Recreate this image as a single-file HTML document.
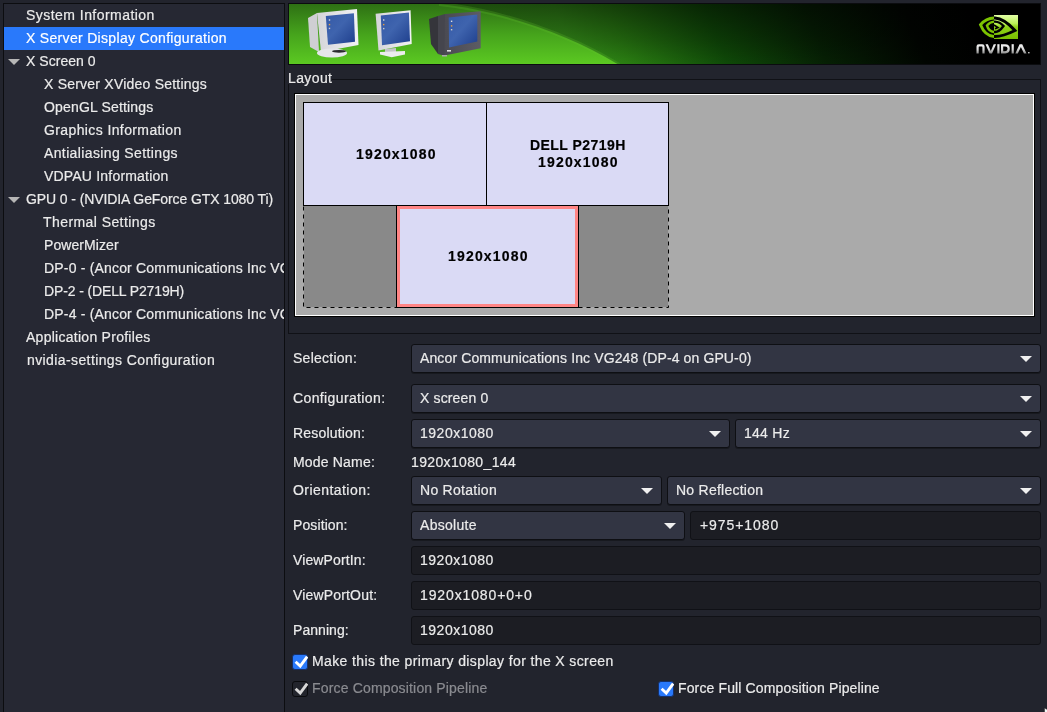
<!DOCTYPE html>
<html><head><meta charset="utf-8">
<style>
*{box-sizing:border-box;margin:0;padding:0}
html,body{width:1047px;height:712px;overflow:hidden;background:#22242d;font-family:"Liberation Sans",sans-serif;color:#ebebeb}
.a{position:absolute}
.t{position:absolute;font-size:14px;line-height:16px;white-space:pre;will-change:transform;-webkit-text-stroke-width:0.2px}
.combo{position:absolute;height:29px;background:#323543;border:1px solid #0e0f13;border-radius:3px;box-shadow:0 1px 0 rgba(0,0,0,.3)}
.combo i{position:absolute;right:8px;top:11px;width:0;height:0;border-left:6px solid transparent;border-right:6px solid transparent;border-top:6.5px solid #f0f0f0}
.entry{position:absolute;height:29px;background:#1c1d23;border:1px solid #101116;border-radius:3px}
.cb{position:absolute;width:15px;height:15px;border-radius:3px}
.cb.on{background:#2979fb;border:1px solid #15306a}
.cb.off{background:#22242c;border:1px solid #0a0b0e}
.cb svg{position:absolute;left:-1px;top:-1px}
</style></head><body>

<div class="a" style="left:3px;top:3px;width:282px;height:709px;background:#262833;border-left:1px solid #0c0d10;border-top:1px solid #0c0d10;border-right:1px solid #0c0d10"></div>
<div class="a" style="left:4px;top:27px;width:280px;height:23px;background:#2979fb"></div>
<div class="a" style="left:4px;top:4px;width:280px;height:708px;overflow:hidden">
<div class="t" style="left:22.00px;top:3px;letter-spacing:0.459px;">System Information</div>
<div class="t" style="left:22.00px;top:26px;letter-spacing:0.315px;color:#ffffff;">X Server Display Configuration</div>
<div class="t" style="left:22.00px;top:49px;letter-spacing:0.043px;">X Screen 0</div>
<div class="a" style="left:4px;top:55px;width:0;height:0;border-left:6px solid transparent;border-right:6px solid transparent;border-top:6px solid #b6b6b6"></div>
<div class="t" style="left:40.00px;top:72px;letter-spacing:0.221px;">X Server XVideo Settings</div>
<div class="t" style="left:40.00px;top:95px;letter-spacing:0.166px;">OpenGL Settings</div>
<div class="t" style="left:40.00px;top:118px;letter-spacing:0.389px;">Graphics Information</div>
<div class="t" style="left:40.00px;top:141px;letter-spacing:0.374px;">Antialiasing Settings</div>
<div class="t" style="left:40.00px;top:164px;letter-spacing:0.196px;">VDPAU Information</div>
<div class="t" style="left:22.00px;top:187px;letter-spacing:-0.096px;">GPU 0 - (NVIDIA GeForce GTX 1080 Ti)</div>
<div class="a" style="left:4px;top:193px;width:0;height:0;border-left:6px solid transparent;border-right:6px solid transparent;border-top:6px solid #b6b6b6"></div>
<div class="t" style="left:39.00px;top:210px;letter-spacing:0.426px;">Thermal Settings</div>
<div class="t" style="left:40.00px;top:233px;letter-spacing:0.079px;">PowerMizer</div>
<div class="t" style="left:40.00px;top:256px;letter-spacing:0.184px;">DP-0 - (Ancor Communications Inc VG248)</div>
<div class="t" style="left:40.00px;top:279px;letter-spacing:-0.127px;">DP-2 - (DELL P2719H)</div>
<div class="t" style="left:40.00px;top:302px;letter-spacing:0.184px;">DP-4 - (Ancor Communications Inc VG248)</div>
<div class="t" style="left:22.00px;top:325px;letter-spacing:0.270px;">Application Profiles</div>
<div class="t" style="left:23.00px;top:348px;letter-spacing:0.396px;">nvidia-settings Configuration</div>
</div>
<div class="a" style="left:288px;top:3px;width:753px;height:62px;background:#0b0c0f"></div>
<svg class="a" style="left:289px;top:4px" width="751" height="60" viewBox="0 0 751 60">
<defs>
 <linearGradient id="gd" gradientUnits="userSpaceOnUse" x1="150" y1="61" x2="751" y2="-179">
  <stop offset="0" stop-color="#3c9c18"/><stop offset="0.2" stop-color="#36921a"/><stop offset="0.273" stop-color="#2a7e12"/><stop offset="0.415" stop-color="#0f4a08"/><stop offset="0.558" stop-color="#062004"/><stop offset="0.70" stop-color="#010501"/><stop offset="0.79" stop-color="#000"/>
 </linearGradient>
 <linearGradient id="gv" x1="0" y1="0" x2="0" y2="1">
  <stop offset="0" stop-color="#000" stop-opacity="0.5"/><stop offset="0.6" stop-color="#000" stop-opacity="0.22"/><stop offset="1" stop-color="#000" stop-opacity="0"/>
 </linearGradient>
 <linearGradient id="gb" x1="0" y1="0" x2="0" y2="1">
  <stop offset="0" stop-color="#2e7014"/><stop offset="0.5" stop-color="#46a41c"/><stop offset="1" stop-color="#5cca22"/>
 </linearGradient>
 <linearGradient id="sq" x1="0" y1="0" x2="0" y2="1">
  <stop offset="0" stop-color="#e2ffa6"/><stop offset="0.35" stop-color="#bdf25a"/><stop offset="0.5" stop-color="#8fd21a"/><stop offset="1" stop-color="#7ac000"/>
 </linearGradient>
 <linearGradient id="nv" x1="0" y1="0" x2="0" y2="1">
  <stop offset="0" stop-color="#f4f4f4"/><stop offset="0.55" stop-color="#d8d8d8"/><stop offset="1" stop-color="#8a8a8a"/>
 </linearGradient>
 <linearGradient id="scr" x1="0" y1="0" x2="1" y2="1">
  <stop offset="0" stop-color="#3358a6"/><stop offset="0.45" stop-color="#3f64ae"/><stop offset="1" stop-color="#1e3e8c"/>
 </linearGradient>
 <linearGradient id="wh" x1="0" y1="0" x2="1" y2="0">
  <stop offset="0" stop-color="#d4d4d8"/><stop offset="1" stop-color="#f2f2f4"/>
 </linearGradient>
 <linearGradient id="dk" x1="0" y1="0" x2="1" y2="0">
  <stop offset="0" stop-color="#4a4a52"/><stop offset="1" stop-color="#5c5c64"/>
 </linearGradient>
 <clipPath id="cl"><rect x="0" y="0" width="705" height="61"/></clipPath>
 <clipPath id="cr"><rect x="705" y="11" width="24" height="24"/></clipPath>
</defs>
<rect width="751" height="61" fill="url(#gd)"/>
<rect width="751" height="61" fill="url(#gv)"/>
<path d="M0 0 L150 0 C210 6 280 30 330 61 L0 61 Z" fill="url(#gb)"/>
<path d="M150 0 C210 6 280 30 330 61" fill="none" stroke="#62c22c" stroke-opacity="0.22" stroke-width="4"/>
<!-- monitor 1: white CRT -->
<polygon points="19,14 28,9 30,48 21,43" fill="#cfcfd3"/>
<polygon points="28,9 68,5 69.5,41 32,48" fill="url(#wh)"/>
<polygon points="36.8,12 64.9,9.2 66,37.8 39,40.7" fill="url(#scr)"/>
<ellipse cx="43" cy="49" rx="15" ry="4.5" fill="#e6e6ea"/>
<ellipse cx="50" cy="47.3" rx="7" ry="1.4" fill="#2a2a2e"/>
<rect x="39.8" y="15.3" width="1.4" height="1.4" fill="#ddd"/><rect x="39.8" y="19.9" width="1.4" height="1.4" fill="#e8a040"/><rect x="39.8" y="23.7" width="1.4" height="1.4" fill="#ccc"/>
<!-- monitor 2: white LCD -->
<polygon points="86.6,9.7 121.6,6.3 122.7,40.1 89.5,46.4" fill="url(#wh)"/>
<polygon points="91.8,11.5 119.9,8.6 121,37.2 93,41.3" fill="url(#scr)"/>
<polygon points="96,45 107,44 107,48 96,49" fill="#c4c4c8"/>
<polygon points="91,48 116,47 116,50.4 102.7,53.3 91,50.4" fill="#ececee"/>
<rect x="94" y="15.3" width="1.4" height="1.4" fill="#ddd"/><rect x="94" y="19.9" width="1.4" height="1.4" fill="#e8a040"/><rect x="94" y="23.9" width="1.4" height="1.4" fill="#ccc"/>
<!-- monitor 3: dark CRT -->
<polygon points="140,15 149,12 149,50 142,40" fill="#35353b"/>
<polygon points="149,12 156,10 156,52 149,50" fill="#45454d"/>
<polygon points="156,10 191.7,7.2 191.7,44.3 155.5,51.4" fill="url(#dk)"/>
<polygon points="159.7,13.5 188.3,10.5 188.3,37.5 160.1,43.4" fill="url(#scr)"/>
<rect x="158" y="46" width="4" height="1.6" fill="#ddd"/>
<rect x="161.9" y="16.6" width="1.4" height="1.4" fill="#ddd"/><rect x="161.9" y="21.2" width="1.4" height="1.4" fill="#e8a040"/><rect x="161.9" y="25" width="1.4" height="1.4" fill="#ccc"/>
<rect x="153" y="51" width="5" height="1.5" fill="#aaa"/>
<!-- nvidia logo -->
<rect x="705" y="11" width="24" height="24" fill="url(#sq)"/>
<g clip-path="url(#cl)" fill="none" stroke="#7cc400">
 <path d="M691.5 20.7 C696 15.5 701 14 706 14 C714 14.5 721 21 726 26.5 C719 30 712 32.5 706 32.5 C699 32.5 694 27 691.5 20.7 Z" stroke-width="2.9"/>
 <path d="M698 21.6 C700.5 18.6 703 17.6 706 17.6 C709.5 17.8 712.5 19.8 714.5 22 C712 25.5 709 28 706 28 C702 28 699 25.2 698 21.6 Z" stroke-width="2.4"/>
</g>
<g clip-path="url(#cr)" fill="none" stroke="#000">
 <path d="M691.5 20.7 C696 15.5 701 14 706 14 C714 14.5 721 21 726 26.5 C719 30 712 32.5 706 32.5 C699 32.5 694 27 691.5 20.7 Z" stroke-width="2.9"/>
 <path d="M698 21.6 C700.5 18.6 703 17.6 706 17.6 C709.5 17.8 712.5 19.8 714.5 22 C712 25.5 709 28 706 28 C702 28 699 25.2 698 21.6 Z" stroke-width="2.4"/>
 <path d="M705 21 L709 23.5 L706 24.8" stroke-width="1.6"/>
</g>
<g fill="url(#nv)">
 <path d="M687.5 49.5 V42.5 Q687.5 40.2 689.8 40.2 H693.3 Q695.6 40.2 695.6 42.5 V49.5 H693.4 V42.9 Q693.4 42.4 692.9 42.4 H690.2 Q689.7 42.4 689.7 42.9 V49.5 Z"/>
 <polygon points="696.5,40.2 698.9,40.2 701.8,46.9 704.7,40.2 707.1,40.2 703,49.5 700.6,49.5"/>
 <rect x="708.3" y="40.2" width="2.2" height="9.3"/>
 <path d="M712 40.2 H716.3 Q720.8 40.2 720.8 44.85 Q720.8 49.5 716.3 49.5 H712 Z M714.2 42.4 V47.3 H716.1 Q718.6 47.3 718.6 44.85 Q718.6 42.4 716.1 42.4 Z"/>
 <rect x="722.6" y="40.2" width="2.2" height="9.3"/>
 <polygon points="730.6,40.2 733.2,40.2 737.5,49.5 735,49.5 731.9,42.9 728.8,49.5 726.3,49.5"/>
 <rect x="739" y="48.2" width="1.6" height="1.3"/>
</g>
</svg>
<div class="a" style="left:288px;top:79px;width:753px;height:255px;border:1px solid #101116"></div>
<div class="a" style="left:287px;top:72px;width:45px;height:12px;background:#22242d"></div>
<div class="t" style="left:288.00px;top:70px;letter-spacing:0.390px;">Layout</div>
<div class="a" style="left:294px;top:93px;width:741px;height:224px;background:#000"></div>
<div class="a" style="left:295px;top:94px;width:739px;height:222px;background:#fff"></div>
<div class="a" style="left:296px;top:95px;width:737px;height:220px;background:#aaaaaa"></div>
<div class="a" style="left:304px;top:205px;width:364px;height:102px;background:#898989"></div>
<svg class="a" style="left:303px;top:102px" width="366" height="206"><rect x="0.5" y="0.5" width="365" height="205" fill="none" stroke="#000" stroke-dasharray="4 4"/></svg>
<div class="a" style="left:303px;top:102px;width:184px;height:104px;background:#dadaf5;border:1px solid #000"></div>
<div class="a" style="left:486px;top:102px;width:183px;height:104px;background:#dadaf5;border:1px solid #000"></div>
<div class="a" style="left:396px;top:205px;width:183px;height:103px;background:#dadaf5;border:1px solid #000"></div>
<div class="a" style="left:397px;top:206px;width:181px;height:101px;border:3px solid #ff8585"></div>
<div class="t" style="left:356.45px;top:146px;letter-spacing:1.177px;font-weight:bold;color:#000;">1920x1080</div>
<div class="t" style="left:529.66px;top:137px;letter-spacing:0.455px;font-weight:bold;color:#000;">DELL P2719H</div>
<div class="t" style="left:538.35px;top:154px;letter-spacing:1.177px;font-weight:bold;color:#000;">1920x1080</div>
<div class="t" style="left:448.15px;top:248px;letter-spacing:1.177px;font-weight:bold;color:#000;">1920x1080</div>
<div class="t" style="left:293.00px;top:350px;letter-spacing:0.257px;">Selection:</div>
<div class="combo" style="left:411px;top:344px;width:630px"><i></i></div>
<div class="t" style="left:420.00px;top:350px;letter-spacing:0.121px;">Ancor Communications Inc VG248 (DP-4 on GPU-0)</div>
<div class="t" style="left:293.00px;top:390px;letter-spacing:0.376px;">Configuration:</div>
<div class="combo" style="left:411px;top:384px;width:630px"><i></i></div>
<div class="t" style="left:420.00px;top:390px;letter-spacing:0.139px;">X screen 0</div>
<div class="t" style="left:293.00px;top:425px;letter-spacing:0.177px;">Resolution:</div>
<div class="combo" style="left:411px;top:419px;width:319px"><i></i></div>
<div class="t" style="left:420.00px;top:425px;letter-spacing:0.511px;">1920x1080</div>
<div class="combo" style="left:735px;top:419px;width:306px"><i></i></div>
<div class="t" style="left:744.00px;top:425px;letter-spacing:0.272px;">144 Hz</div>
<div class="t" style="left:293.00px;top:454px;letter-spacing:0.183px;">Mode Name:</div>
<div class="t" style="left:411.00px;top:454px;letter-spacing:0.355px;">1920x1080_144</div>
<div class="t" style="left:293.00px;top:482px;letter-spacing:0.446px;">Orientation:</div>
<div class="combo" style="left:411px;top:476px;width:251px"><i></i></div>
<div class="t" style="left:420.00px;top:482px;letter-spacing:0.279px;">No Rotation</div>
<div class="combo" style="left:667px;top:476px;width:374px"><i></i></div>
<div class="t" style="left:676.00px;top:482px;letter-spacing:0.250px;">No Reflection</div>
<div class="t" style="left:293.00px;top:517px;letter-spacing:0.101px;">Position:</div>
<div class="combo" style="left:411px;top:511px;width:274px"><i></i></div>
<div class="t" style="left:420.00px;top:517px;letter-spacing:0.303px;">Absolute</div>
<div class="entry" style="left:690px;top:511px;width:351px"></div>
<div class="t" style="left:700.00px;top:517px;letter-spacing:0.918px;">+975+1080</div>
<div class="t" style="left:293.00px;top:552px;letter-spacing:0.125px;">ViewPortIn:</div>
<div class="entry" style="left:411px;top:546px;width:630px"></div>
<div class="t" style="left:420.00px;top:552px;letter-spacing:0.511px;">1920x1080</div>
<div class="t" style="left:293.00px;top:587px;letter-spacing:0.169px;">ViewPortOut:</div>
<div class="entry" style="left:411px;top:581px;width:630px"></div>
<div class="t" style="left:420.00px;top:587px;letter-spacing:0.874px;">1920x1080+0+0</div>
<div class="t" style="left:293.00px;top:622px;letter-spacing:0.061px;">Panning:</div>
<div class="entry" style="left:411px;top:616px;width:630px"></div>
<div class="t" style="left:420.00px;top:622px;letter-spacing:0.511px;">1920x1080</div>
<div class="cb on" style="left:292px;top:654px;width:16px;height:16px"><svg width="16" height="16" viewBox="0 0 16 16"><path d="M3.6 7.8 L8.2 12 L15.2 2.6" fill="none" stroke="#fff" stroke-width="2.9" stroke-linecap="butt" stroke-linejoin="miter"/></svg></div>
<div class="t" style="left:312.00px;top:653px;letter-spacing:0.384px;">Make this the primary display for the X screen</div>
<div class="cb off" style="left:292px;top:681px;width:16px;height:16px"><svg width="16" height="16" viewBox="0 0 16 16"><path d="M3.6 7.8 L8.2 12 L15.2 2.6" fill="none" stroke="#d8d8d8" stroke-width="2.9" stroke-linecap="butt" stroke-linejoin="miter"/></svg></div>
<div class="t" style="left:312.00px;top:680px;letter-spacing:0.164px;color:#8a8b90;">Force Composition Pipeline</div>
<div class="cb on" style="left:658px;top:681px;width:16px;height:16px"><svg width="16" height="16" viewBox="0 0 16 16"><path d="M3.6 7.8 L8.2 12 L15.2 2.6" fill="none" stroke="#fff" stroke-width="2.9" stroke-linecap="butt" stroke-linejoin="miter"/></svg></div>
<div class="t" style="left:678.00px;top:680px;letter-spacing:0.134px;">Force Full Composition Pipeline</div>
<svg class="a" style="left:1044px;top:708px" width="6" height="6"><path d="M0.5 0 L0.5 6 L2 4.5 L4 6 L5 5 L3 3 L5 2.5 Z" fill="#f4f4f4" stroke="#222" stroke-width="0.5"/></svg>
</body></html>
